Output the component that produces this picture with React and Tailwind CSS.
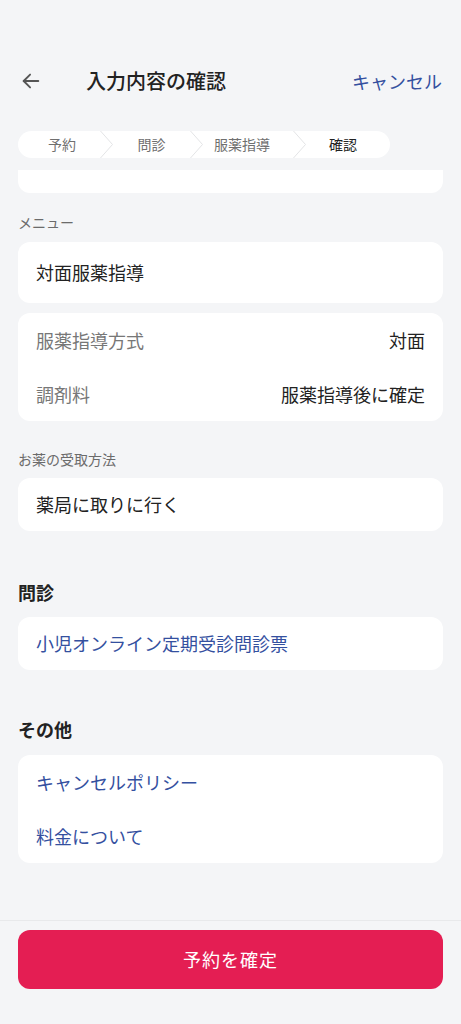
import React from "react";

const font = { fontFamily: '"Noto Sans CJK JP", "Noto Sans", sans-serif' };

const steps = [
  { label: "予約", cls: "w-[82px] pl-[6px]", active: false },
  { label: "問診", cls: "w-[77px]", active: false },
  { label: "服薬指導", cls: "w-[90px] pr-[12px]", active: false },
  { label: "確認", cls: "w-[84px] pr-[10px]", active: true },
];

function Chevron() {
  return (
    <svg width="13" height="27" viewBox="0 0 13 27" className="shrink-0">
      <path d="M0.5 0 L12.5 13.5 L0.5 27" fill="none" stroke="#e3e4e6" strokeWidth="1" />
    </svg>
  );
}

function Stepper() {
  return (
    <div className="mx-[18px] flex h-[27px] w-[372px] items-center rounded-full bg-white">
      {steps.map((s, i) => (
        <React.Fragment key={s.label}>
          <div
            className={`flex h-full items-center justify-center text-[14px] ${s.cls} ${
              s.active ? "text-[#222]" : "text-[#6f6f6f]"
            }`}
          >
            {s.label}
          </div>
          {i < steps.length - 1 && <Chevron />}
        </React.Fragment>
      ))}
    </div>
  );
}

function Row({ label, value }) {
  return (
    <div className="flex h-[54px] items-center justify-between px-[18px] text-[18px]">
      <span className="text-[#777]">{label}</span>
      <span className="text-[#222]">{value}</span>
    </div>
  );
}

export default function App() {
  return (
    <div className="flex min-h-screen flex-col bg-[#f4f5f7]" style={font}>
      <div className="flex-1">
        {/* Header */}
        <div className="mt-[61px] flex h-[40px] items-center pl-[20px] pr-[19px]">
          <svg width="22" height="22" viewBox="0 0 24 24" fill="none" stroke="#555" strokeWidth="2" strokeLinecap="round" strokeLinejoin="round">
            <path d="M20 12H4" />
            <path d="M11 5l-7 7 7 7" />
          </svg>
          <h1 className="ml-[44px] flex-1 text-[20px] font-medium text-[#222]">入力内容の確認</h1>
          <button className="text-[18px] text-[#34509f]">キャンセル</button>
        </div>

        {/* Steps */}
        <div className="mt-[30px]">
          <Stepper />
        </div>

        {/* Scrolled-off card */}
        <div className="mx-[18px] mt-[12px] h-[23px] rounded-b-xl bg-white" />

        {/* Menu */}
        <div className="mx-[18px] mt-[19px] text-[14px] leading-[20px] text-[#6b6b6b]">メニュー</div>
        <div className="mx-[18px] mt-[10px] flex h-[61px] items-center rounded-xl bg-white px-[18px] text-[18px] text-[#222]">
          対面服薬指導
        </div>
        <div className="mx-[18px] mt-[10px] rounded-xl bg-white">
          <Row label="服薬指導方式" value="対面" />
          <Row label="調剤料" value="服薬指導後に確定" />
        </div>

        {/* Receipt */}
        <div className="mx-[18px] mt-[28px] text-[14px] leading-[20px] text-[#6b6b6b]">お薬の受取方法</div>
        <div className="mx-[18px] mt-[9px] flex h-[53px] items-center rounded-xl bg-white px-[18px] text-[18px] text-[#222]">
          薬局に取りに行く
        </div>

        {/* Questionnaire */}
        <h2 className="mx-[18px] mt-[48px] text-[18px] font-bold leading-[26px] text-[#222]">問診</h2>
        <div className="mx-[18px] mt-[12px] flex h-[53px] items-center rounded-xl bg-white px-[18px] text-[18px] text-[#34509f]">
          小児オンライン定期受診問診票
        </div>

        {/* Other */}
        <h2 className="mx-[18px] mt-[46px] text-[18px] font-bold leading-[26px] text-[#222]">その他</h2>
        <div className="mx-[18px] mt-[13px] rounded-xl bg-white">
          <div className="flex h-[54px] items-center px-[18px] text-[18px] text-[#34509f]">キャンセルポリシー</div>
          <div className="flex h-[54px] items-center px-[18px] text-[18px] text-[#34509f]">料金について</div>
        </div>
      </div>

      {/* Footer */}
      <div className="h-[104px] border-t border-[#e8e9eb] bg-[#f4f5f7] px-[18px] pt-[9px]">
        <button className="flex h-[59px] w-full items-center justify-center rounded-xl bg-[#e41e53] text-[18px] tracking-[1px] text-white">
          予約を確定
        </button>
      </div>
    </div>
  );
}
